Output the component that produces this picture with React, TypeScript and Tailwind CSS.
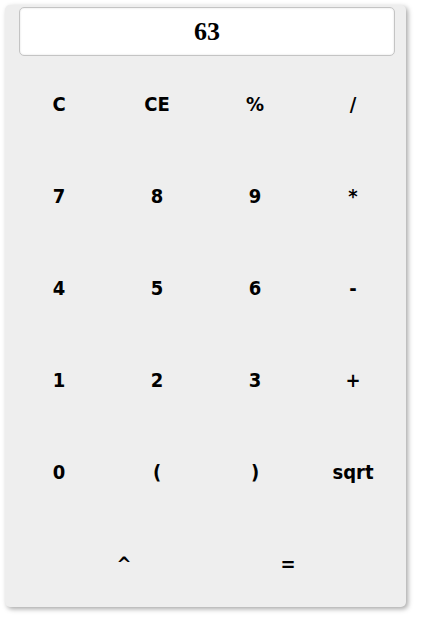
import React from 'react'

const rows = [
  ['C', 'CE', '%', '/'],
  ['7', '8', '9', '*'],
  ['4', '5', '6', '-'],
  ['1', '2', '3', '+'],
  ['0', '(', ')', 'sqrt'],
]

const App = () => {
  return (
    <div className="w-[430px] h-[624px] bg-white pt-[5px] pl-[5px]">
      <div
        className="w-[401px] h-[602px] bg-[#eeeeee] rounded-[5px] shadow-[2px_2px_5px_rgba(0,0,0,0.35)] pl-[5px] pr-[4px] pt-[2px]"
        style={{ fontFamily: '"DejaVu Sans Condensed", "DejaVu Sans", Verdana, sans-serif' }}
      >
        {/* Display */}
        <div className="ml-[9px] mr-[7px] h-[49px] bg-white border border-[#c4c4c4] rounded-[5px] shadow-[inset_0_0_2px_rgba(0,0,0,0.15)] flex items-center justify-center">
          <span
            className="text-[26px] font-bold text-black leading-none"
            style={{ fontFamily: '"Liberation Serif", "Times New Roman", serif' }}
          >
            63
          </span>
        </div>

        {/* Keys */}
        <div className="mt-[2px] grid grid-cols-4">
          {rows.flat().map((key, i) => (
            <button
              key={i}
              className="h-[92px] flex items-center justify-center text-[20px] font-bold text-black"
            >
              {key}
            </button>
          ))}
        </div>
        <div className="flex justify-center">
          <button className="w-[164px] h-[92px] flex items-center justify-center text-[20px] font-bold text-black">
            ^
          </button>
          <button className="w-[164px] h-[92px] flex items-center justify-center text-[20px] font-bold text-black">
            =
          </button>
        </div>
      </div>
    </div>
  )
}

export default App
